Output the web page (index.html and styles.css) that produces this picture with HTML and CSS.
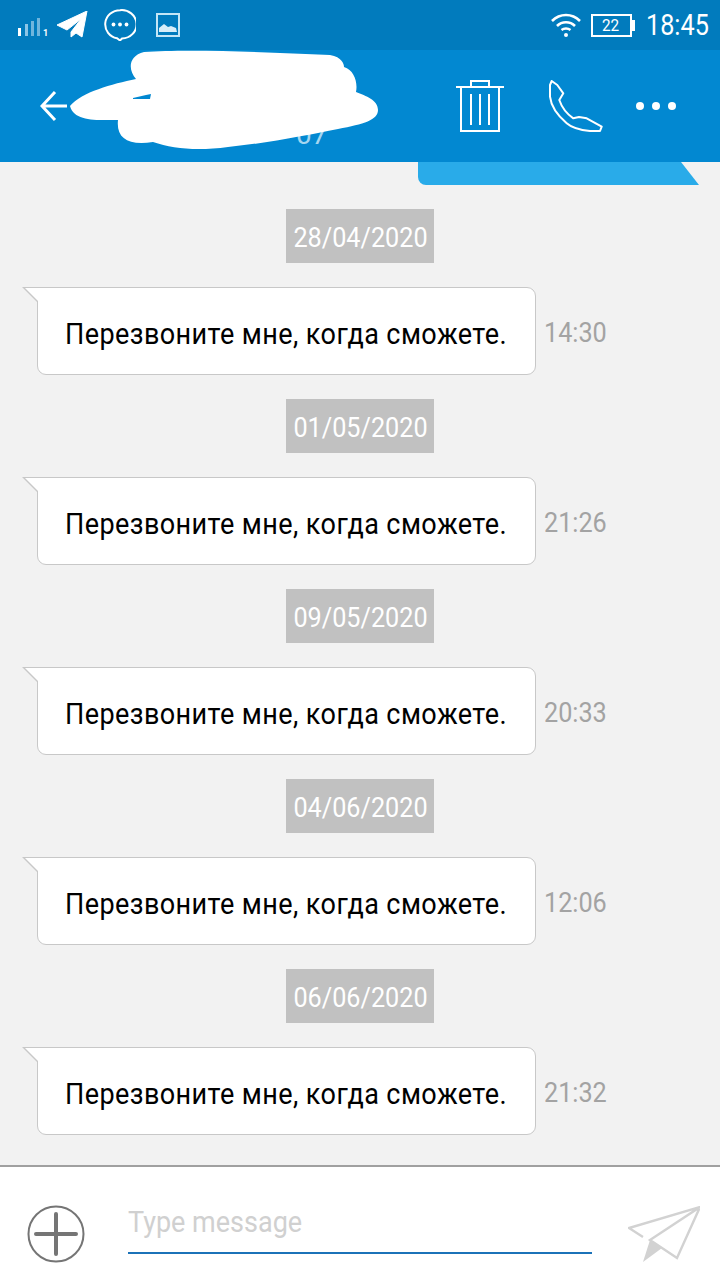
FILE: index.html
```html
<!DOCTYPE html>
<html lang="ru">
<head>
  <meta charset="UTF-8" />
  <meta name="viewport" content="width=device-width, initial-scale=1.0" />
  <title>Messages</title>
  <link rel="stylesheet" href="styles.css">
</head>
<body>
  <div class="phone">
    <div class="statusbar">
      <svg class="ic-signal" viewBox="0 0 30 20">
        <rect x="0" y="11" width="3" height="8" fill="#fff"/>
        <rect x="7" y="7" width="3" height="12" fill="#8cc5e6"/>
        <rect x="13" y="4" width="3" height="15" fill="#6fb5dd"/>
        <rect x="19" y="1" width="3" height="18" fill="#6fb5dd"/>
        <text x="25" y="19" font-size="9" font-weight="700" fill="#fff" font-family="Roboto, sans-serif">1</text>
      </svg>
      <svg class="ic-telegram" viewBox="0 0 32 28">
        <path d="M31 0 L1 14 L11 19 L25 8 L15 21 L15 26 L20 22 L26 26 Z" fill="#fff" stroke="#fff" stroke-linejoin="round"/>
      </svg>
      <svg class="ic-chat" viewBox="0 0 32 32">
        <path d="M16 1.2 A14.8 14.2 0 1 1 18 29.5 L16 31.5 L13 29.3 A14.8 14.2 0 0 1 16 1.2 Z" fill="none" stroke="#fff" stroke-width="2"/>
        <circle cx="9.5" cy="15.5" r="1.9" fill="#fff"/>
        <circle cx="16" cy="15.5" r="1.9" fill="#fff"/>
        <circle cx="22.5" cy="15.5" r="1.9" fill="#fff"/>
      </svg>
      <svg class="ic-image" viewBox="0 0 24 24">
        <rect x="1" y="1" width="22" height="22" fill="none" stroke="#c4e6f6" stroke-width="2"/>
        <path d="M3 19 V15 L8 11 L12 14 L15 13 L20 15 L21 19 Z" fill="#d7eef9"/>
      </svg>
      <div class="status-right">
        <svg class="ic-wifi" viewBox="0 0 30 24">
          <path d="M1 8 C9 0 21 0 29 8" fill="none" stroke="#fff" stroke-width="2.6"/>
          <path d="M6 13 C11 8 19 8 24 13" fill="none" stroke="#fff" stroke-width="2.6"/>
          <path d="M10.5 17 C13 15 17 15 19.5 17" fill="none" stroke="#fff" stroke-width="2.4"/>
          <circle cx="15" cy="22" r="2" fill="#fff"/>
        </svg>
        <div class="battery"><span class="narrow">22</span></div>
        <div class="clock"><span class="narrow">18:45</span></div>
      </div>
    </div>

    <header class="appbar">
      <svg class="ic-back" viewBox="0 0 28 32">
        <path d="M27 16 H2 M15 2 L2 16 L15 30" fill="none" stroke="#fff" stroke-width="3"/>
      </svg>
      <div class="contact">
        <span class="contact-number">07</span>
      </div>
      <div class="actions">
        <svg class="ic-trash" viewBox="0 0 48 52">
          <path d="M0 7 H48 M15 7 V1 H33 V7 M5 7 V51 H43 V7 M15 14 V45 M24 14 V45 M33 14 V45" fill="none" stroke="#fff" stroke-width="2"/>
        </svg>
        <svg class="ic-phone" viewBox="0 0 54 52">
          <path d="M2.7 1 L8.3 5 L14.3 13.3 L10.3 20 C13 28 18 34 24.3 38.3 L30 37 L37.7 38.3 L52.7 46.7 L51 51 H41 C30 50 23 48 17.7 43.3 C8 35 2 26 1 16.7 L1 5 Z" fill="none" stroke="#fff" stroke-width="2" stroke-linejoin="round"/>
        </svg>
        <svg class="ic-dots" viewBox="0 0 40 8">
          <circle cx="4" cy="4" r="4" fill="#fff"/>
          <circle cx="20" cy="4" r="4" fill="#fff"/>
          <circle cx="36" cy="4" r="4" fill="#fff"/>
        </svg>
      </div>
      <!-- закрашено в оригинале -->
      <svg class="blot" viewBox="0 0 320 110">
        <path d="M2 56 C14 42 44 34 68 29 C60 20 60 6 76 2 C120 -1 200 2 262 5 C274 7 276 14 276 17 C286 20 290 32 288 42 C298 46 310 50 310 60 C310 70 296 74 270 79 C240 85 200 93 160 97 C130 101 105 99 85 92 C60 96 48 88 50 70 C30 70 6 72 2 56 Z" fill="#fff"/>
        <path d="M65 48 L78 45 L83 44 L82 49 L65 49 Z" fill="#0288d1"/>
      </svg>
    </header>

    <main class="messages">
      <div class="sent-bubble"></div>

      <div class="date"><span class="narrow">28/04/2020</span></div>
      <div class="msg">
        <div class="bubble"><span class="narrow">Перезвоните мне, когда сможете.</span></div>
        <span class="time narrow">14:30</span>
      </div>

      <div class="date"><span class="narrow">01/05/2020</span></div>
      <div class="msg">
        <div class="bubble"><span class="narrow">Перезвоните мне, когда сможете.</span></div>
        <span class="time narrow">21:26</span>
      </div>

      <div class="date"><span class="narrow">09/05/2020</span></div>
      <div class="msg">
        <div class="bubble"><span class="narrow">Перезвоните мне, когда сможете.</span></div>
        <span class="time narrow">20:33</span>
      </div>

      <div class="date"><span class="narrow">04/06/2020</span></div>
      <div class="msg">
        <div class="bubble"><span class="narrow">Перезвоните мне, когда сможете.</span></div>
        <span class="time narrow">12:06</span>
      </div>

      <div class="date"><span class="narrow">06/06/2020</span></div>
      <div class="msg">
        <div class="bubble"><span class="narrow">Перезвоните мне, когда сможете.</span></div>
        <span class="time narrow">21:32</span>
      </div>
    </main>

    <footer class="composer">
      <svg class="ic-plus" viewBox="0 0 58 58">
        <circle cx="29" cy="29" r="27.5" fill="none" stroke="#757575" stroke-width="2"/>
        <path d="M9 29 H49 M29 9 V49" stroke="#757575" stroke-width="4" stroke-linecap="round"/>
      </svg>
      <div class="input"><span class="narrow">Type message</span></div>
      <svg class="ic-send" viewBox="0 0 72 56">
        <path d="M15 31 L1 22 L72 1 L49 52 L22 34 L72 1" fill="none" stroke="#d2d2d2" stroke-width="2.4"/>
        <path d="M22 34 L15 56 L34 42 Z" fill="#d2d2d2"/>
      </svg>
    </footer>
  </div>
</body>
</html>
```

FILE: styles.css
```css
html, body {
  margin: 0;
  padding: 0;
  font-family: Roboto, sans-serif;
}

.phone {
  display: flex;
  flex-direction: column;
  width: 720px;
  height: 1280px;
  overflow: hidden;
  background: #f2f2f2;
}

/* в оригинале Roboto Condensed, сужаем обычный */
.narrow {
  display: inline-block;
  transform: scaleX(0.9);
  transform-origin: left center;
  white-space: nowrap;
}

/* status bar */
.statusbar {
  display: flex;
  align-items: center;
  height: 50px;
  padding: 0 12px 0 18px;
  background: #017bbd;
  color: #fff;
  flex-shrink: 0;
}

.ic-signal {
  width: 30px;
  height: 20px;
  margin-top: 4px;
}

.ic-telegram {
  width: 32px;
  height: 28px;
  margin-left: 8px;
}

.ic-chat {
  width: 32px;
  height: 32px;
  margin-left: 16px;
}

.ic-image {
  width: 24px;
  height: 24px;
  margin-left: 20px;
}

.status-right {
  display: flex;
  align-items: center;
  margin-left: auto;
}

.ic-wifi {
  width: 30px;
  height: 24px;
}

.battery {
  position: relative;
  width: 37px;
  height: 19px;
  margin-left: 10px;
  border: 2px solid #fff;
  font-size: 17px;
  line-height: 19px;
  text-align: center;
}

.battery::after {
  content: "";
  position: absolute;
  right: -5px;
  top: 4px;
  width: 3px;
  height: 11px;
  background: #fff;
}

.clock {
  width: 62px;
  margin-left: 14px;
  font-size: 29px;
}

.clock .narrow {
  transform: scaleX(0.87);
}

/* app bar */
.appbar {
  position: relative;
  display: flex;
  align-items: center;
  height: 112px;
  padding: 0 44px 0 40px;
  background: #0288d1;
  flex-shrink: 0;
}

.ic-back {
  width: 28px;
  height: 32px;
}

.contact {
  align-self: flex-end;
  margin-left: 228px;
  padding-bottom: 11px;
}

.contact-number {
  color: #a5d6f0;
  font-size: 28px;
}

.actions {
  display: flex;
  align-items: center;
  margin-left: auto;
}

.ic-trash {
  width: 48px;
  height: 52px;
}

.ic-phone {
  width: 54px;
  height: 52px;
  margin-left: 45px;
}

.ic-dots {
  width: 40px;
  height: 8px;
  margin-left: 33px;
}

.blot {
  position: absolute;
  left: 68px;
  top: 0;
  width: 320px;
  height: 110px;
}

/* conversation */
.messages {
  display: flex;
  flex-direction: column;
  gap: 24px;
  flex: 1;
  min-height: 0;
}

.sent-bubble {
  position: relative;
  width: 263px;
  height: 23px;
  margin-left: 418px;
  background: #29abe9;
  border-bottom-left-radius: 8px;
}

.sent-bubble::after {
  content: "";
  position: absolute;
  left: 100%;
  top: 0;
  width: 18px;
  height: 23px;
  background: #29abe9;
  clip-path: polygon(0 0, 100% 100%, 0 100%);
}

.date {
  width: 148px;
  height: 54px;
  margin: 0 auto;
  background: #c1c1c1;
  color: #fff;
  font-size: 28px;
  line-height: 58px;
  text-align: center;
}

.date .narrow {
  transform-origin: center;
}

.msg {
  display: flex;
  align-items: center;
  gap: 8px;
  margin-left: 37px;
}

.bubble {
  position: relative;
  box-sizing: border-box;
  width: 499px;
  height: 88px;
  padding-left: 27px;
  background: #fff;
  border: 1px solid #c8c8c8;
  border-radius: 0 9px 9px 9px;
  color: #000;
  font-size: 30px;
  line-height: 92px;
  letter-spacing: 0.47px;
  white-space: nowrap;
}

/* хвостик пузыря */
.bubble::before,
.bubble::after {
  content: "";
  position: absolute;
  clip-path: polygon(0 0, 100% 0, 100% 100%);
}

.bubble::before {
  left: -16px;
  top: -1px;
  width: 16px;
  height: 16px;
  background: #c8c8c8;
}

.bubble::after {
  left: -13px;
  top: 0;
  width: 14px;
  height: 14px;
  background: #fff;
}

.time {
  color: #a3a3a3;
  font-size: 28px;
  margin-top: 3px;
}

/* composer */
.composer {
  display: flex;
  align-items: center;
  box-sizing: border-box;
  height: 115px;
  padding: 21px 0 0 27px;
  background: #fff;
  border-top: 2px solid #a0a0a0;
  flex-shrink: 0;
}

.ic-plus {
  width: 58px;
  height: 58px;
}

.input {
  box-sizing: border-box;
  width: 464px;
  height: 49px;
  margin: 0 0 10px 43px;
  border-bottom: 2px solid #1b72b8;
  color: #d0d0d0;
  font-size: 30px;
  line-height: 34px;
}

.ic-send {
  width: 72px;
  height: 56px;
  margin-left: 36px;
}
```
